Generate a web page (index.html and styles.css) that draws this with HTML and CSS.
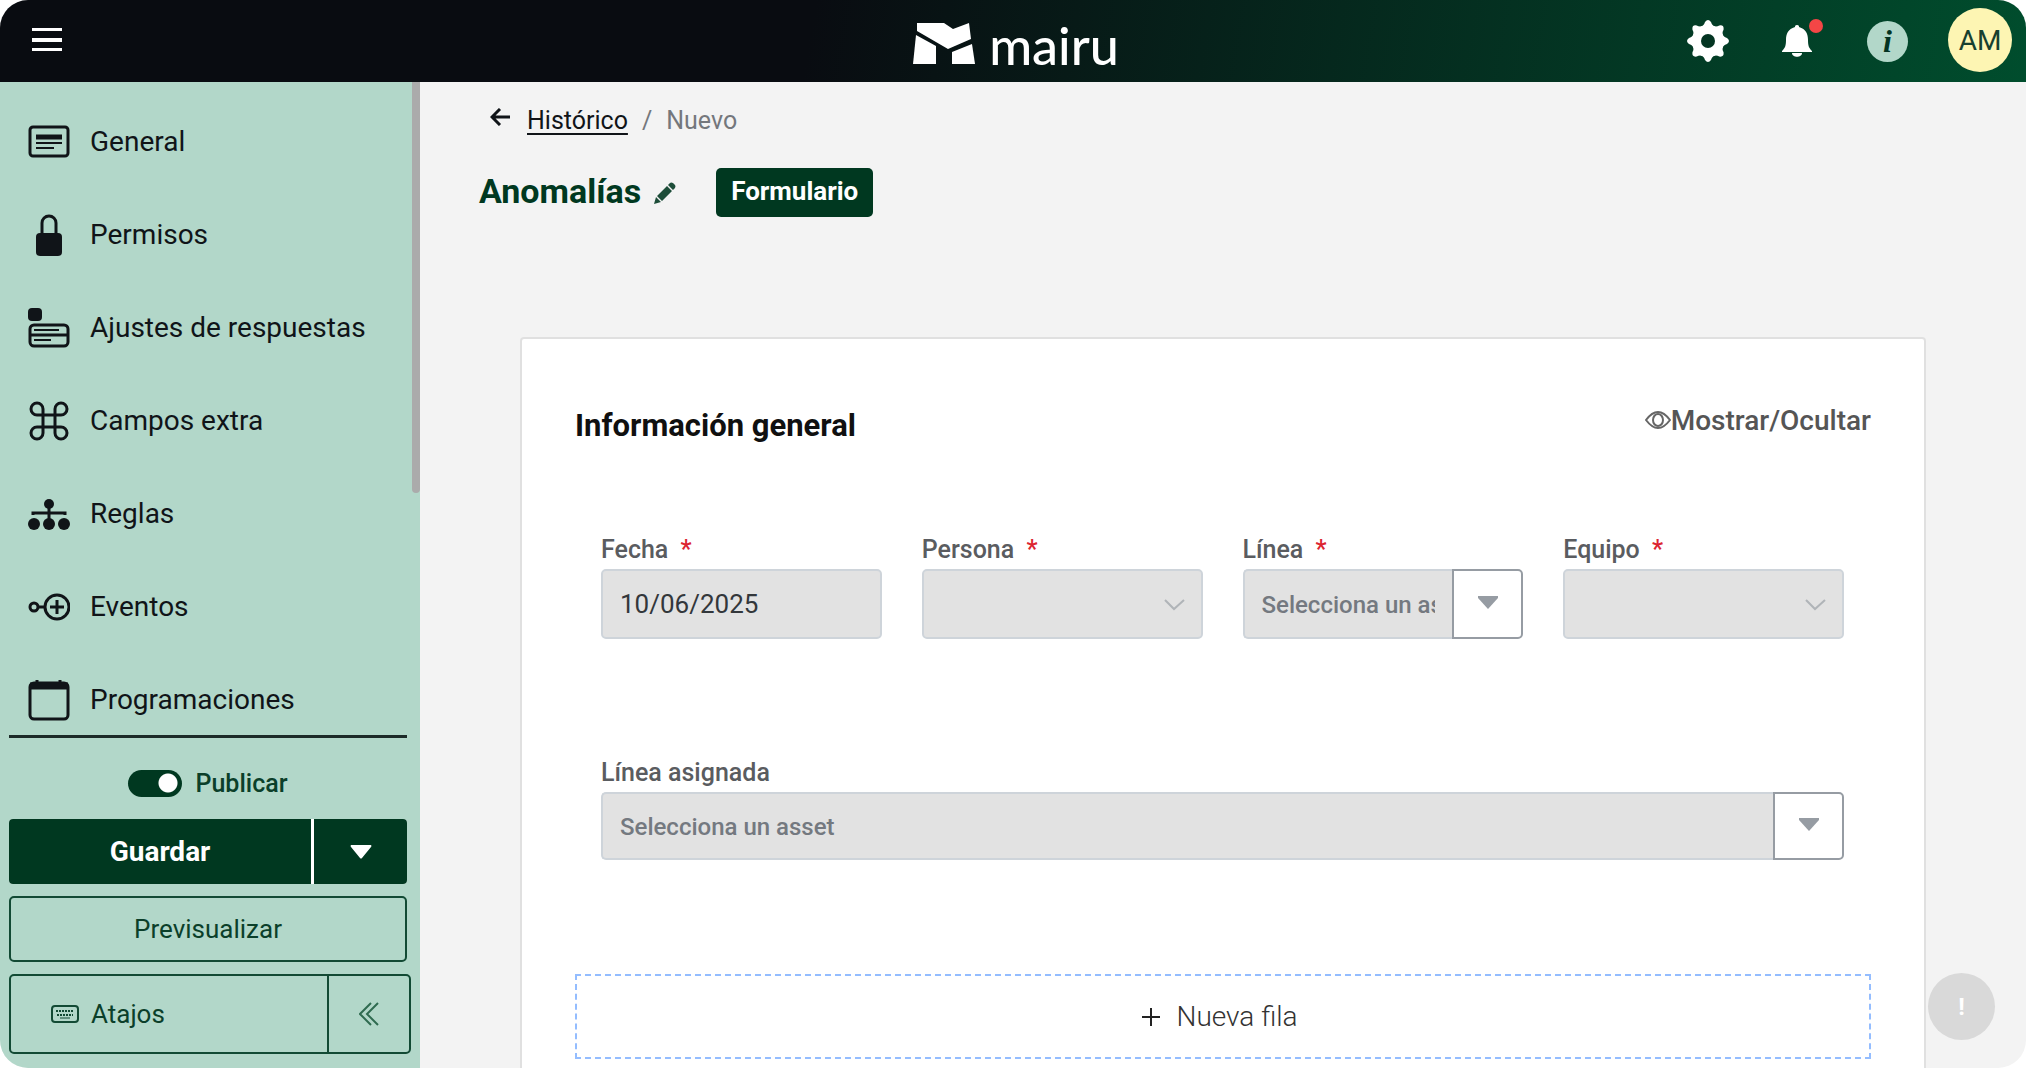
FILE: index.html
```html
<!DOCTYPE html>
<html lang="es">
<head>
  <meta charset="UTF-8">
  <meta name="viewport" content="width=device-width, initial-scale=1.0">
  <title>Anomalías - mairu</title>
  <link rel="stylesheet" href="styles.css">
</head>
<body>
  <div class="app">

    <!-- Top bar -->
    <header class="topbar">
      <button type="button" class="icon-btn menu-btn" aria-label="Menú">
        <svg width="30" height="24" viewBox="0 0 30 24" fill="#fff"><path d="M0 0h30v3H0zM0 10h30v4H0zM0 20h30v3H0z"/></svg>
      </button>

      <a href="#" class="logo">
        <svg width="62" height="42" viewBox="0 0 62 42" fill="#fff">
          <path d="M4 1h27l9 6 16-6 2 16-23 10L4 9z"/>
          <path d="M3 13l20 11v18H0z"/>
          <path d="M39 30l20-8 3 20H39z"/>
        </svg>
        <span>mairu</span>
      </a>

      <div class="topbar-actions">
        <button type="button" class="icon-btn" aria-label="Configuración">
          <svg width="42" height="42" viewBox="0 0 42 42">
            <g fill="#fff">
              <circle cx="21" cy="21" r="16"/>
              <path id="tooth" d="M13 7q4-1 5-5 3-4 6 0 1 4 5 5v28q-4 1-5 5-3 4-6 0-1-4-5-5z"/>
              <use href="#tooth" transform="rotate(45 21 21)"/>
              <use href="#tooth" transform="rotate(90 21 21)"/>
              <use href="#tooth" transform="rotate(135 21 21)"/>
            </g>
            <circle cx="21" cy="21" r="7" fill="#033422"/>
          </svg>
        </button>
        <button type="button" class="icon-btn bell-btn" aria-label="Notificaciones">
          <svg width="30" height="32" viewBox="0 0 30 32" fill="#fff">
            <path d="M15 0c2 0 2 1 2 2 7 2 9 7 9 13 0 6 1 8 4 11v1H0v-1c3-3 4-5 4-11C4 9 6 4 13 2c0-1 0-2 2-2z"/>
            <path d="M10 28h10c0 5-10 5-10 0z"/>
          </svg>
          <span class="dot"></span>
        </button>
        <button type="button" class="icon-btn info-btn" aria-label="Información">i</button>
        <button type="button" class="icon-btn avatar">AM</button>
      </div>
    </header>

    <div class="layout">

      <!-- Sidebar -->
      <aside class="sidebar">
        <nav class="side-nav">
          <a href="#">
            <svg width="42" height="42" viewBox="0 0 42 42" fill="none" stroke="#101418" stroke-width="3">
              <rect x="2" y="6" width="38" height="29" rx="3"/>
              <path d="M8 16h26" stroke-width="5"/>
              <path d="M8 22h26M8 27h18" stroke-width="2"/>
            </svg>
            General
          </a>
          <a href="#">
            <svg width="42" height="42" viewBox="0 0 42 42">
              <path d="M14 22V9a7 7 0 0 1 14 0v13" fill="none" stroke="#101418" stroke-width="3"/>
              <rect x="8" y="19" width="26" height="23" rx="4" fill="#101418"/>
            </svg>
            Permisos
          </a>
          <a href="#">
            <svg width="42" height="42" viewBox="0 0 42 42" fill="none" stroke="#101418" stroke-width="3">
              <rect x="0" y="1" width="14" height="13" rx="4" fill="#101418" stroke="none"/>
              <rect x="2" y="18" width="38" height="21" rx="4"/>
              <path d="M1 28h40"/>
              <path d="M6 23h25M6 33h17" stroke-width="2"/>
            </svg>
            Ajustes de respuestas
          </a>
          <a href="#">
            <svg width="42" height="42" viewBox="0 0 42 42" fill="none" stroke="#101418" stroke-width="3">
              <path d="M15 15H9a6 6 0 1 1 6-6v24a6 6 0 1 1-6-6h24a6 6 0 1 1-6 6V9a6 6 0 1 1 6 6z"/>
            </svg>
            Campos extra
          </a>
          <a href="#">
            <svg width="42" height="42" viewBox="0 0 42 42" fill="#101418">
              <circle cx="21" cy="11" r="5"/>
              <circle cx="6" cy="31" r="6"/>
              <circle cx="21" cy="31" r="6"/>
              <circle cx="36" cy="31" r="6"/>
              <path d="M21 11v15M5 22v-2h32v2" fill="none" stroke="#101418" stroke-width="3"/>
            </svg>
            Reglas
          </a>
          <a href="#">
            <svg width="42" height="42" viewBox="0 0 42 42" fill="none" stroke="#101418" stroke-width="3">
              <circle cx="6" cy="21" r="4"/>
              <circle cx="29" cy="21" r="12"/>
              <path d="M10 21h7M22 21h14M29 14v14"/>
            </svg>
            Eventos
          </a>
          <a href="#">
            <svg width="42" height="42" viewBox="0 0 42 42" fill="none" stroke="#101418" stroke-width="3">
              <rect x="2" y="4" width="38" height="36" rx="4"/>
              <path d="M2 7h38" stroke-width="7"/>
              <path d="M9 1v4M32 1v4"/>
            </svg>
            Programaciones
          </a>
          <span class="scroll-thumb"></span>
        </nav>

        <div class="side-actions">
          <label class="publish">
            <input type="checkbox" class="switch" checked>
            Publicar
          </label>
          <div class="save-group">
            <button type="button" class="save-btn">Guardar</button>
            <button type="button" class="save-more" aria-label="Más opciones">
              <svg width="22" height="14" viewBox="0 0 22 14" fill="#fff"><path d="M1 0h20q1 1 0 2L12 13q-1 1-2 0L1 2q-1-1 0-2z"/></svg>
            </button>
          </div>
          <button type="button" class="preview-btn">Previsualizar</button>
          <div class="shortcut-group">
            <button type="button" class="shortcut-btn">
              <svg width="28" height="18" viewBox="0 0 28 18" fill="none" stroke="#124a34" stroke-width="2">
                <rect x="1" y="1" width="26" height="16" rx="3"/>
                <path d="M5 6h18M6 10h16" stroke-dasharray="2 1"/>
                <path d="M9 13h10" stroke-width="1"/>
              </svg>
              Atajos
            </button>
            <button type="button" class="collapse-btn" aria-label="Contraer">
              <svg width="20" height="24" viewBox="0 0 20 24" fill="none" stroke="#2f6b50" stroke-width="2"><path d="M12 1L1 12l11 11M19 1L8 12l11 11"/></svg>
            </button>
          </div>
        </div>
      </aside>

      <!-- Content -->
      <main class="content">
        <div class="breadcrumb">
          <a href="#" class="back" aria-label="Volver">
            <svg width="20" height="18" viewBox="0 0 20 18" fill="none" stroke="#101418" stroke-width="3"><path d="M20 9H2M10 1L2 9l8 8"/></svg>
          </a>
          <a href="#">Histórico</a>
          <span class="sep">/</span>
          <span>Nuevo</span>
        </div>

        <div class="title-row">
          <h1>Anomalías</h1>
          <button type="button" class="icon-btn" aria-label="Editar nombre">
            <svg width="22" height="22" viewBox="0 0 22 22" fill="#1d4d39"><path d="M0 22l2-7 5 5zM3 14L13 4l5 5L8 19zM14 3l2-2q1-1 3 0l2 2q1 1 0 3l-2 2z"/></svg>
          </button>
          <button type="button" class="form-btn">Formulario</button>
        </div>

        <section class="card">
          <div class="card-header">
            <h2>Información general</h2>
            <button type="button" class="toggle-view">
              <svg width="26" height="18" viewBox="0 0 26 18" fill="none" stroke="#666" stroke-width="2">
                <path d="M1 9q6-8 12-8t12 8q-6 8-12 8T1 9z"/>
                <ellipse cx="13" cy="9" rx="5" ry="6"/>
              </svg>
              Mostrar/Ocultar
            </button>
          </div>

          <div class="fields">
            <div class="field">
              <label for="fecha">Fecha <span class="req">*</span></label>
              <input type="text" id="fecha" class="control" value="10/06/2025">
            </div>
            <div class="field">
              <label for="persona">Persona <span class="req">*</span></label>
              <div class="select-wrap">
                <select id="persona" class="control"><option></option></select>
                <svg width="21" height="12" viewBox="0 0 21 12" fill="none" stroke="#b0b4b8" stroke-width="2"><path d="M1 1l9 9 10-9"/></svg>
              </div>
            </div>
            <div class="field">
              <label for="linea">Línea <span class="req">*</span></label>
              <div class="combo">
                <input type="text" id="linea" class="control" placeholder="Selecciona un asset">
                <button type="button" aria-label="Abrir lista">
                  <svg width="20" height="13" viewBox="0 0 20 13" fill="#969ca3"><path d="M0 0h20v2L10 13 0 2z"/></svg>
                </button>
              </div>
            </div>
            <div class="field">
              <label for="equipo">Equipo <span class="req">*</span></label>
              <div class="select-wrap">
                <select id="equipo" class="control"><option></option></select>
                <svg width="21" height="12" viewBox="0 0 21 12" fill="none" stroke="#b0b4b8" stroke-width="2"><path d="M1 1l9 9 10-9"/></svg>
              </div>
            </div>
            <div class="field field-wide">
              <label for="asignada">Línea asignada</label>
              <div class="combo">
                <input type="text" id="asignada" class="control" placeholder="Selecciona un asset">
                <button type="button" aria-label="Abrir lista">
                  <svg width="20" height="13" viewBox="0 0 20 13" fill="#969ca3"><path d="M0 0h20v2L10 13 0 2z"/></svg>
                </button>
              </div>
            </div>
          </div>

          <button type="button" class="add-row">
            <svg width="18" height="18" viewBox="0 0 18 18" fill="none" stroke="#222" stroke-width="2"><path d="M9 0v18M0 9h18"/></svg>
            Nueva fila
          </button>
        </section>

        <button type="button" class="help-btn" aria-label="Avisos">!</button>
      </main>
    </div>
  </div>
</body>
</html>
```

FILE: styles.css
```css
* {
  box-sizing: border-box;
}

body {
  margin: 0;
  background: #fff;
  font-family: Roboto, "Liberation Sans", sans-serif;
  font-size: 24px;
  color: #101418;
}

button,
input,
select {
  font: inherit;
  color: inherit;
}

button {
  cursor: pointer;
  padding: 0;
}

a {
  color: inherit;
}

svg {
  display: block;
  flex: none;
}

.app {
  display: flex;
  flex-direction: column;
  height: 100vh;
  border-radius: 28px;
  overflow: hidden;
  background: #f3f3f3;
}

.icon-btn {
  position: relative;
  display: flex;
  align-items: center;
  justify-content: center;
  background: none;
  border: none;
}

/* Top bar */
.topbar {
  flex: none;
  display: grid;
  grid-template-columns: 1fr auto 1fr;
  align-items: center;
  height: 82px;
  padding: 0 14px;
  background: linear-gradient(100deg, #090c11 40%, #004d2d);
}

.menu-btn {
  justify-self: start;
  margin: 0 0 2px 18px;
}

.logo {
  display: flex;
  align-items: center;
  gap: 14px;
  padding: 3px 0 0 6px;
  color: #fff;
  font-family: Lato, sans-serif;
  font-size: 52px;
  font-weight: 500;
  line-height: 60px;
  text-decoration: none;
}

.logo span {
  padding-top: 4px;
}

.topbar-actions {
  justify-self: end;
  display: flex;
  align-items: center;
}

.bell-btn {
  margin: 0 55px 0 53px;
}

.dot {
  position: absolute;
  top: -6px;
  right: -11px;
  width: 14px;
  height: 14px;
  border-radius: 50%;
  background: #f44646;
}

.info-btn {
  width: 41px;
  height: 41px;
  border-radius: 50%;
  background: #b2d7c9;
  color: #033422;
  font-family: "Liberation Serif", serif;
  font-size: 32px;
  font-style: italic;
  font-weight: bold;
}

.avatar {
  width: 64px;
  height: 64px;
  margin: 0 0 2px 40px;
  border-radius: 50%;
  background: #fdf5b3;
  color: #17402f;
  font-size: 28px;
}

.layout {
  flex: 1;
  display: flex;
  min-height: 0;
}

/* Sidebar */
.sidebar {
  flex: none;
  display: flex;
  flex-direction: column;
  width: 420px;
  background: #b2d7c9;
}

.side-nav {
  position: relative;
  flex: 1;
  min-height: 0;
  padding-top: 13px;
  overflow: hidden;
}

.side-nav a {
  display: flex;
  align-items: center;
  gap: 20px;
  height: 93px;
  padding-left: 28px;
  font-size: 28px;
  text-decoration: none;
}

.scroll-thumb {
  position: absolute;
  top: 0;
  right: 0;
  width: 8px;
  height: 411px;
  border-radius: 0 0 4px 4px;
  background: #ababab;
}

.side-actions {
  display: flex;
  flex-direction: column;
  gap: 12px;
  margin: 0 9px;
  padding-bottom: 14px;
  color: #0b3f2a;
}

.side-actions > * {
  margin-right: 4px;
}

.publish {
  display: flex;
  align-items: center;
  justify-content: center;
  gap: 13px;
  height: 72px;
  padding-top: 22px;
  border-top: 3px solid #1c2b28;
  font-size: 25px;
  font-weight: 500;
}

.switch {
  appearance: none;
  width: 54px;
  height: 27px;
  margin: 0;
  border-radius: 14px;
  background: radial-gradient(circle at 40px 13px, #fff 9px, #003820 10px);
}

.save-group {
  display: flex;
  gap: 3px;
  height: 65px;
  border-radius: 4px;
  overflow: hidden;
  background: #fff;
}

.save-group button {
  border: none;
  background: #003820;
  color: #fff;
}

.save-btn {
  flex: 1;
  font-size: 28px;
  font-weight: bold;
}

.save-more {
  display: flex;
  align-items: center;
  justify-content: center;
  width: 93px;
}

.preview-btn {
  height: 66px;
  border: 2px solid #124a34;
  border-radius: 5px;
  background: none;
  font-size: 26px;
}

.shortcut-group {
  display: flex;
  height: 80px;
  margin-right: 0;
  border: 2px solid #124a34;
  border-radius: 5px;
}

.shortcut-group button {
  display: flex;
  align-items: center;
  border: none;
  background: none;
  font-size: 26px;
}

.shortcut-btn {
  flex: 1;
  gap: 12px;
  padding-left: 40px;
}

.shortcut-group .collapse-btn {
  justify-content: center;
  width: 82px;
  border-left: 2px solid #124a34;
}

/* Content */
.content {
  position: relative;
  flex: 1;
  min-width: 0;
  overflow: hidden;
  padding: 0 100px;
}

.breadcrumb {
  display: flex;
  align-items: center;
  height: 76px;
  margin-left: -30px;
  color: #74777c;
  font-size: 25px;
}

.breadcrumb a {
  color: #101418;
  text-underline-offset: 4px;
}

.back {
  margin: 0 17px 6px 0;
}

.sep {
  margin: 0 14px;
}

.title-row {
  display: flex;
  align-items: center;
  margin: 10px 0 0 -41px;
}

.title-row h1 {
  margin: 0 13px 4px 0;
  color: #003820;
  font-size: 34px;
  line-height: 40px;
}

.form-btn {
  height: 49px;
  margin-left: 40px;
  padding: 0 15px 3px;
  border: none;
  border-radius: 5px;
  background: #003820;
  color: #fff;
  font-size: 26px;
  font-weight: bold;
}

.card {
  height: 1100px;
  margin-top: 120px;
  padding: 0 53px;
  border: 2px solid #e0e0e0;
  border-radius: 4px;
  background: #fff;
}

.card-header {
  display: flex;
  align-items: center;
  justify-content: space-between;
  height: 172px;
}

.card-header h2 {
  margin: 0;
  color: #101010;
  font-size: 31px;
}

.toggle-view {
  display: flex;
  align-items: center;
  margin-bottom: 10px;
  border: none;
  background: none;
  color: #555;
  font-size: 28px;
  font-weight: 500;
}

.fields {
  display: grid;
  grid-template-columns: repeat(4, 1fr);
  column-gap: 40px;
  row-gap: 116px;
  margin: 21px 27px 0 26px;
}

.field-wide {
  grid-column: 1 / -1;
}

.field label {
  display: block;
  height: 37px;
  line-height: 36px;
  color: #5a5c60;
  font-size: 25px;
  font-weight: 500;
}

.req {
  margin-left: 6px;
  color: #dc2530;
}

.control {
  display: block;
  width: 100%;
  height: 70px;
  padding: 0 17px;
  border: 2px solid #ced4da;
  border-radius: 5px;
  background: #e2e2e2;
  font-size: 26px;
  color: #33373b;
}

.control::placeholder {
  color: #747980;
  font-size: 24px;
  font-weight: 500;
  opacity: 1;
}

.field-wide .control {
  height: 68px;
}

.select-wrap {
  position: relative;
}

.select-wrap select {
  appearance: none;
}

.select-wrap svg {
  position: absolute;
  top: 30px;
  right: 18px;
  pointer-events: none;
}

.combo {
  display: flex;
}

.combo .control {
  flex: 1;
  min-width: 0;
  border-right: none;
  border-radius: 5px 0 0 5px;
}

.combo button {
  display: flex;
  flex: none;
  align-items: center;
  justify-content: center;
  width: 71px;
  padding-bottom: 4px;
  border: 2px solid #969ca3;
  border-radius: 0 5px 5px 0;
  background: #fff;
}

.add-row {
  display: flex;
  align-items: center;
  justify-content: center;
  gap: 16px;
  width: 100%;
  height: 85px;
  margin-top: 114px;
  padding-right: 6px;
  border: 2px dashed #94bdff;
  background: #fff;
  color: #333;
  font-size: 28px;
  font-weight: 300;
}

.help-btn {
  position: absolute;
  right: 31px;
  bottom: 28px;
  width: 67px;
  height: 67px;
  border: none;
  border-radius: 50%;
  background: #d9d9d9;
  color: #fff;
  font-weight: bold;
}
```
